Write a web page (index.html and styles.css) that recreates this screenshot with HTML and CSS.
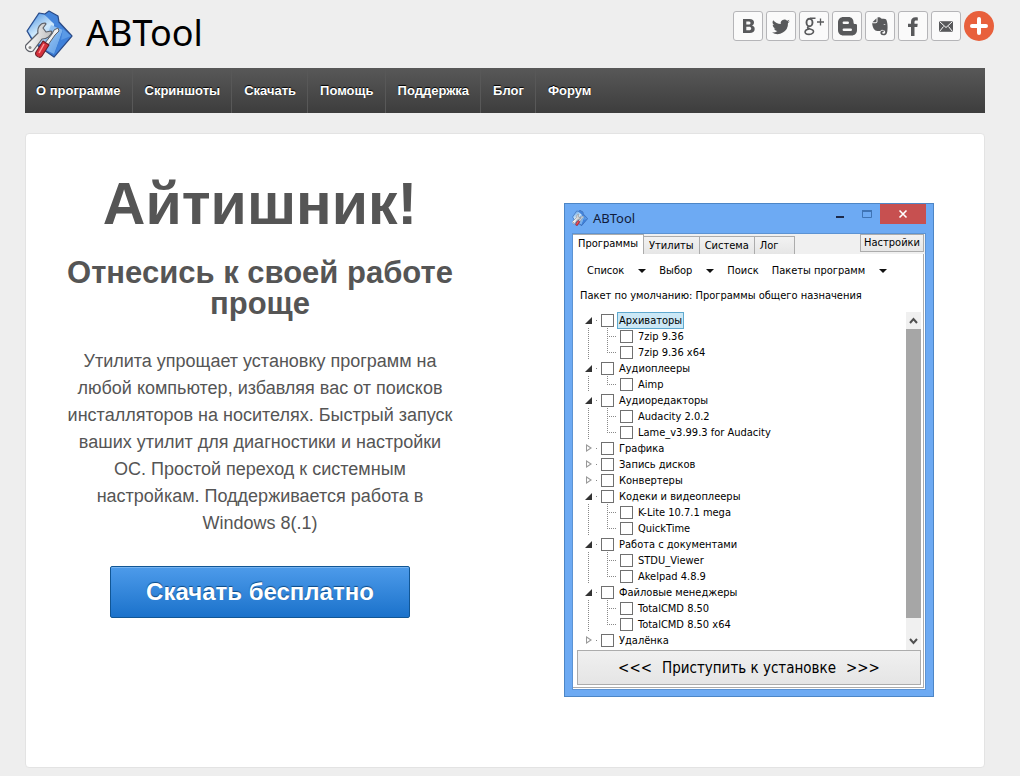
FILE: index.html
```html
<!DOCTYPE html>
<html lang="ru">
<head>
<meta charset="utf-8">
<title>ABTool</title>
<link rel="stylesheet" href="styles.css">
</head>
<body>
<svg class="defs" aria-hidden="true">
  <defs>
    <linearGradient id="sheet" x1=".2" y1="0" x2=".7" y2="1"><stop offset="0" stop-color="#5b9be2"/><stop offset=".5" stop-color="#cfe9fc"/><stop offset="1" stop-color="#8abdf0"/></linearGradient>
    <linearGradient id="folder" x1="0" y1="0" x2="1" y2="1"><stop offset="0" stop-color="#4f8fe0"/><stop offset="1" stop-color="#3170cb"/></linearGradient>
    <linearGradient id="flap" x1="0" y1="0" x2="1" y2="1"><stop offset="0" stop-color="#a9d2f8"/><stop offset="1" stop-color="#5b9ae4"/></linearGradient>
    <linearGradient id="steel" x1="0" y1="0" x2="1" y2="0"><stop offset="0" stop-color="#fff"/><stop offset="1" stop-color="#bdbdbd"/></linearGradient>
    <symbol id="logo" viewBox="0 0 48 48">
      <path d="M2 21 14 3l6 1 4-3 9 5 1 6 13 14-18 21L9 33z" fill="url(#folder)" stroke="#2a4a86" stroke-width="1.200" stroke-linejoin="round"/>
      <path d="M3 21 14.500 4l5 1 10 6-3 26-16-4z" fill="url(#sheet)"/>
      <path d="M20 5l4-3 8 5 1 6 12 13-5-2-13-12z" fill="#4585db"/>
      <path d="M26 15 38 20 29 44 17 38z" fill="url(#flap)"/>
      <path d="M38 19 46 26 29 46z" fill="#3f81da"/>
      <path d="M38 19 46 26 36 30z" fill="#5a9ae6"/>
      <path d="M1 35 13 23c-1-5 2-10 7-10l1 1-3 4 3 4 5-1 1 1c-1 4-5 7-10 7L8 41c-4 2-9-2-7-6z" fill="url(#steel)" stroke="#5d6068" stroke-width="1.200" stroke-linejoin="round"/>
      <circle cx="5" cy="37.500" r="1.500" fill="#888"/>
      <path d="M20 33 27 24l2-4 4-2 1 3-4 4-7 10z" fill="#f0f0f0" stroke="#5d6068" stroke-width="1"/>
      <path d="M18 31 24 35 17 46c-2 3-8 0-6-4z" fill="#d5303b" stroke="#6a1e26" stroke-width="1.100" stroke-linejoin="round"/>
      <path d="M19 34 14 43" stroke="#ff9b9b" stroke-width="1.500"/>
    </symbol>
  </defs>
</svg>

<header class="header">
  <a class="brand" href="#">
    <svg class="brand-icon" aria-hidden="true"><use href="#logo"/></svg>
    <span>ABTool</span>
  </a>
  <div class="share">
    <a class="share-link" href="#" aria-label="ВКонтакте"><svg viewBox="0 0 28 28"><path fill-rule="evenodd" d="M9 7h6.500c3 0 4.500 1.300 4.500 3.600 0 1.500-.8 2.500-2 3 1.600.4 2.700 1.500 2.700 3.300 0 2.700-2 4.100-5 4.100H9zm3.300 2.500v3h2c1.500 0 2.200-.5 2.200-1.500s-.7-1.500-2-1.500zm0 5.300v3.500h2.600c1.500 0 2.300-.6 2.300-1.800s-.9-1.700-2.400-1.700z"/></svg></a>
    <a class="share-link" href="#" aria-label="Twitter"><svg viewBox="0 0 28 28"><path d="M22.900 9.200c-.7.300-1.300.5-2 .6.700-.5 1.300-1.200 1.500-2-.7.500-1.500.7-2.300.9a3.700 3.700 0 0 0-6.300 3.400A10.500 10.500 0 0 1 6.200 8.200a3.700 3.700 0 0 0 1.200 5c-.6 0-1.200-.2-1.700-.5 0 1.800 1.300 3.300 3 3.700-.6.200-1.100.2-1.700.1.500 1.500 1.800 2.500 3.400 2.500A7.500 7.500 0 0 1 5 20.500 10.500 10.500 0 0 0 21 11.100c.7-.5 1.300-1.100 1.900-1.900z"/></svg></a>
    <a class="share-link" href="#" aria-label="Google+"><svg viewBox="0 0 28 28"><g fill="none" stroke="#58595b"><ellipse cx="9.500" cy="10.500" rx="3" ry="3.800" stroke-width="1.900"/><path d="M10 6.300h5.500M8.500 14.500c-3 2.200 2.500 2.200 4.300 3.600 2 1.800-.6 4.300-3.800 4.300-2.800 0-4.200-1.200-3.900-2.800.3-1.500 1.900-2.300 4-2.600" stroke-width="1.600"/><path d="M20.500 6.500v7M17 10h7" stroke-width="1.300"/></g></svg></a>
    <a class="share-link" href="#" aria-label="Blogger"><svg viewBox="0 0 28 28"><path fill-rule="evenodd" d="M10.500 5h5c3 0 5 2.200 5 5 0 1.700.5 2 2 2 1 0 1.500.5 1.500 1.500V18c0 3.300-2.300 5.500-5.500 5.500h-8C7.300 23.500 5 21.300 5 18v-7.500C5 7.200 7.300 5 10.500 5zm.3 4.600a1.200 1.200 0 0 0 0 2.400h4a1.200 1.200 0 0 0 0-2.400zm0 7a1.200 1.200 0 0 0 0 2.400h7a1.200 1.200 0 0 0 0-2.400z"/></svg></a>
    <a class="share-link" href="#" aria-label="Evernote"><svg viewBox="0 0 28 28"><path d="M10.500 6.200v3.200c0 .5-.3.800-.8.800H6.400zM11.500 5.400c1.500-.4 3.200.1 3.600 1 2 .2 3.900.3 4.800.8 1.100.6 2.300 6.700 1.400 12.200-.4 2.500-1.500 3.900-4 3.900-2 0-2.900-1.100-2.900-2.500 0-1.700 1.100-2.500 3.300-2.400v1.500c-1 0-1.500.3-1.500.9 0 .7.500 1 1.500 1 1.200 0 1.700-.9 1.500-2-.3-1.300-1.600-1.800-3.300-2-1 1.200-2.400 1.600-4.500 1.100-3-.4-4.500-2-5.300-7.700h3.500c1.300 0 1.900-.8 1.900-1.900z"/><path d="M17 12.500c1-1 2.200-.8 2.600.6-.9-.5-1.700-.7-2.600-.6z" fill="#fff"/></svg></a>
    <a class="share-link" href="#" aria-label="Facebook"><svg viewBox="0 0 28 28"><path d="M12 24v-9H9v-3.300h3V10c0-3.200 1.600-4.700 4.600-4.700.9 0 1.700.1 2.200.2v3h-1.700c-1.300 0-1.600.6-1.600 1.700v1.500h3.200l-.4 3.300h-2.800v9z"/></svg></a>
    <a class="share-link" href="#" aria-label="Почта"><svg viewBox="0 0 28 28"><path d="M7 9.200h14v10.600H7z"/><path d="M7.500 9.500 14 15.500l6.500-6M7.500 19.500l4-5M20.500 19.500l-4-5" fill="none" stroke="#fff" stroke-width="1"/></svg></a>
    <a class="share-more" href="#" aria-label="Ещё"><svg viewBox="0 0 30 30"><path d="M15 8v14M8 15h14" stroke="#fff" stroke-width="4" stroke-linecap="round"/></svg></a>
  </div>
</header>

<nav class="menu">
  <a href="#">О программе</a>
  <a href="#">Скриншоты</a>
  <a href="#">Скачать</a>
  <a href="#">Помощь</a>
  <a href="#">Поддержка</a>
  <a href="#">Блог</a>
  <a href="#">Форум</a>
</nav>

<main class="featured">
  <section class="pitch">
    <h1>Айтишник!</h1>
    <h2>Отнесись к своей работе проще</h2>
    <p>Утилита упрощает установку программ на любой компьютер, избавляя вас от поисков инсталляторов на носителях. Быстрый запуск ваших утилит для диагностики и настройки ОС. Простой переход к системным настройкам. Поддерживается работа в Windows 8(.1)</p>
    <a class="download" href="#">Скачать бесплатно</a>
  </section>

  <section class="window" aria-label="ABTool">
    <div class="titlebar">
      <svg class="titlebar-icon" aria-hidden="true"><use href="#logo"/></svg>
      <span class="titlebar-text">ABTool</span>
      <button class="win-button" aria-label="Свернуть"><svg viewBox="0 0 12 12"><path d="M2 9h8" stroke="#1d2a4a" stroke-width="2"/></svg></button>
      <button class="win-button" aria-label="Развернуть"><svg viewBox="0 0 12 12"><path d="M1.500 2.500h9v7h-9z" fill="none" stroke="#3f74b5"/><path d="M1 3h10" stroke="#3f74b5" stroke-width="2"/></svg></button>
      <button class="win-button close" aria-label="Закрыть"><svg viewBox="0 0 12 12"><path d="M2.500 2.500l7 7M9.500 2.500l-7 7" stroke="#fff" stroke-width="1.600"/></svg></button>
    </div>
    <div class="client">
      <div class="tabs">
        <button class="tab active">Программы</button>
        <button class="tab">Утилиты</button>
        <button class="tab">Система</button>
        <button class="tab log">Лог</button>
        <button class="settings">Настройки</button>
      </div>
      <div class="panel">
        <div class="toolbar">
          <button class="tool drop">Список</button>
          <button class="tool drop">Выбор</button>
          <button class="tool">Поиск</button>
          <button class="tool drop">Пакеты программ</button>
        </div>
        <p class="package">Пакет по умолчанию: Программы общего назначения</p>
        <div class="list">
          <ul class="tree">
            <li class="open"><label class="row selected"><input type="checkbox"><span>Архиваторы</span></label>
              <ul>
                <li><label class="row"><input type="checkbox"><span>7zip 9.36</span></label></li>
                <li><label class="row"><input type="checkbox"><span>7zip 9.36 x64</span></label></li>
              </ul></li>
            <li class="open"><label class="row"><input type="checkbox"><span>Аудиоплееры</span></label>
              <ul>
                <li><label class="row"><input type="checkbox"><span>Aimp</span></label></li>
              </ul></li>
            <li class="open"><label class="row"><input type="checkbox"><span>Аудиоредакторы</span></label>
              <ul>
                <li><label class="row"><input type="checkbox"><span>Audacity 2.0.2</span></label></li>
                <li><label class="row"><input type="checkbox"><span>Lame_v3.99.3 for Audacity</span></label></li>
              </ul></li>
            <li><label class="row"><input type="checkbox"><span>Графика</span></label></li>
            <li><label class="row"><input type="checkbox"><span>Запись дисков</span></label></li>
            <li><label class="row"><input type="checkbox"><span>Конвертеры</span></label></li>
            <li class="open"><label class="row"><input type="checkbox"><span>Кодеки и видеоплееры</span></label>
              <ul>
                <li><label class="row"><input type="checkbox"><span>K-Lite 10.7.1 mega</span></label></li>
                <li><label class="row"><input type="checkbox"><span>QuickTime</span></label></li>
              </ul></li>
            <li class="open"><label class="row"><input type="checkbox"><span>Работа с документами</span></label>
              <ul>
                <li><label class="row"><input type="checkbox"><span>STDU_Viewer</span></label></li>
                <li><label class="row"><input type="checkbox"><span>Akelpad 4.8.9</span></label></li>
              </ul></li>
            <li class="open"><label class="row"><input type="checkbox"><span>Файловые менеджеры</span></label>
              <ul>
                <li><label class="row"><input type="checkbox"><span>TotalCMD 8.50</span></label></li>
                <li><label class="row"><input type="checkbox"><span>TotalCMD 8.50 x64</span></label></li>
              </ul></li>
            <li><label class="row"><input type="checkbox"><span>Удалёнка</span></label></li>
          </ul>
          <div class="scrollbar" aria-hidden="true">
            <svg viewBox="0 0 15 17"><path d="M4 11l3.500-4 3.500 4" fill="none" stroke="#505050" stroke-width="2"/></svg>
            <div class="thumb"></div>
            <svg viewBox="0 0 15 17"><path d="M4 6l3.500 4L11 6" fill="none" stroke="#505050" stroke-width="2"/></svg>
          </div>
        </div>
        <button class="start"><span>&lt;&lt;&lt;</span><span>Приступить к установке</span><span>&gt;&gt;&gt;</span></button>
      </div>
    </div>
  </section>
</main>
</body>
</html>
```
FILE: styles.css
```css
* {
  box-sizing: border-box;
}

body {
  margin: 0;
  background: #eee;
  color: #555;
  font-family: "Liberation Sans", Arial, sans-serif;
}

a {
  color: inherit;
  text-decoration: none;
}

button {
  margin: 0;
  padding: 0;
  border: 0;
  background: none;
  color: inherit;
  font: inherit;
}

ul {
  margin: 0;
  padding: 0;
  list-style: none;
}

.defs {
  position: absolute;
  width: 0;
  height: 0;
}

/* Header */
.header {
  display: flex;
  justify-content: space-between;
  align-items: flex-start;
  height: 68px;
  padding: 10px 26px 0 25px;
}

.brand {
  display: flex;
  align-items: flex-start;
  gap: 13px;
  color: #000;
  font: 36px/46px "Noto Sans", sans-serif;
}

.brand-icon {
  width: 48px;
  height: 48px;
}

.share {
  display: flex;
  gap: 3px;
  padding-top: 1px;
}

.share-link {
  width: 30px;
  height: 30px;
  border: 1px solid #b5b5b8;
  border-radius: 3px;
  background: #fafafa;
  fill: #58595b;
}

.share-link svg,
.share-more svg {
  display: block;
}

.share-more {
  width: 30px;
  height: 30px;
  border-radius: 50%;
  background: #e8603c;
}

/* Main menu */
.menu {
  display: flex;
  margin: 0 35px 20px 25px;
  background: linear-gradient(#585858, #3d3d3d);
  color: #fff;
  font-size: 13px;
  font-weight: bold;
  line-height: 45px;
  text-shadow: 0 -1px 1px #000;
}

.menu a {
  padding: 0 11px 0 12px;
  border-right: 1px solid #585858;
}

.menu a:first-child {
  padding-left: 11px;
}

.menu a:last-child {
  border-right: 0;
}

/* Featured block */
.featured {
  display: flex;
  justify-content: space-between;
  align-items: flex-start;
  margin: 0 35px 8px 25px;
  padding: 39px 50px 70px 36px;
  border: 1px solid #e3e3e3;
  border-radius: 4px;
  background: #fff;
}

.pitch {
  width: 396px;
  text-align: center;
}

.pitch h1 {
  margin: 0 0 22px;
  font-size: 59px;
  line-height: 62px;
}

.pitch h2 {
  margin: 0 0 29px;
  font-size: 31px;
  line-height: 31px;
}

.pitch p {
  margin: 0 0 29px;
  font-size: 18px;
  line-height: 27px;
}

.download {
  display: block;
  width: 300px;
  margin: 0 auto;
  border: 1px solid #115695;
  border-radius: 2px;
  background: linear-gradient(#4d9bea, #1b72cb);
  box-shadow: inset 0 1px 0 #76b3f0;
  color: #fff;
  font-size: 24px;
  font-weight: bold;
  line-height: 50px;
  text-shadow: 0 -1px 1px #0d4a85;
}

/* Application window */
.window {
  width: 370px;
  margin-top: 30px;
  padding: 0 7px 6px;
  border: 1px solid #4d86c6;
  background: #6daaf3;
  color: #000;
  font: 11px/16px "DejaVu Sans Condensed", Tahoma, sans-serif;
}

.titlebar {
  display: flex;
  align-items: flex-start;
  height: 29px;
}

.titlebar-icon {
  width: 16px;
  height: 16px;
  margin: 6px 5px 0 0;
}

.titlebar-text {
  flex: 1;
  color: #111b3a;
  font: 13px/28px "Noto Sans", sans-serif;
}

.win-button {
  display: flex;
  align-items: center;
  justify-content: center;
  width: 27px;
  height: 20px;
}

.win-button svg {
  width: 12px;
  height: 12px;
}

.win-button.close {
  width: 46px;
  background: #c75050;
}

.client {
  padding: 0 1px 1px 0;
  border: 1px solid #5c93d3;
  background: linear-gradient(#f0f0f0 20px, #fff 20px);
}

.tabs {
  display: flex;
  align-items: flex-end;
  height: 20px;
}

.tab {
  height: 18px;
  padding: 0 5px;
  border: 1px solid #acacac;
  border-width: 1px 1px 0 0;
  background: linear-gradient(#f2f2f2, #e6e6e6);
}

.tab.active {
  height: 20px;
  padding-bottom: 2px;
  background: #fff;
}

.tab.log {
  padding-right: 15px;
}

.settings {
  align-self: flex-start;
  height: 18px;
  margin-left: auto;
  padding: 0 3px;
  border: 1px solid #acacac;
  background: linear-gradient(#f2f2f2, #e6e6e6);
}

.panel {
  padding: 4px 2px 2px 4px;
  border: 1px solid #acacac;
  border-width: 0 1px 1px 0;
}

.toolbar {
  display: flex;
  gap: 13px;
  height: 26px;
  padding-left: 10px;
}

.tool {
  display: flex;
  align-items: center;
}

.drop::after {
  content: "";
  margin-left: 14px;
  border: 4px solid transparent;
  border-top-color: #111;
  border-bottom: 0;
}

.package {
  margin: 4px 0 8px 3px;
}

.list {
  display: flex;
  justify-content: space-between;
}

.tree {
  padding: 0 0 2px 8px;
}

.row {
  display: flex;
  align-items: center;
  height: 16px;
}

.row::before {
  content: "";
  width: 16px;
  height: 16px;
  background: linear-gradient(#888, #888) 11px 8px / 1px 1px no-repeat;
}

.row input {
  appearance: none;
  width: 13px;
  height: 13px;
  margin: 0 4px 0 0;
  border: 1px solid #707070;
  background: #fff;
}

.row span {
  padding: 0 1px;
  line-height: 15px;
}

.row.selected span {
  background: #cbe8f6;
  box-shadow: 0 0 0 1px #5fa9cf;
}

.tree > li {
  position: relative;
}

/* Collapsed and expanded markers over the row's left edge */
.tree > li::before,
.tree > li::after {
  content: "";
  position: absolute;
  top: 4px;
  left: 1px;
  width: 6px;
  height: 8px;
  background: #999;
  clip-path: polygon(0 0, 100% 50%, 0 100%);
}

.tree > li::after {
  top: 6px;
  left: 2px;
  width: 3px;
  height: 4px;
  background: #fff;
}

.tree > li.open::before {
  top: 5px;
  left: 0;
  width: 7px;
  height: 7px;
  background: #333;
  clip-path: polygon(100% 0, 100% 100%, 0 100%);
}

.tree > li.open::after {
  content: none;
}

.tree ul {
  padding-left: 22px;
  background: repeating-linear-gradient(#888 0 1px, transparent 1px 2px) 3px 0 / 1px 100% no-repeat;
}

.tree ul .row::before {
  width: 9px;
  margin-right: 4px;
  background:
    repeating-linear-gradient(#888 0 1px, transparent 1px 2px) 0 0 / 1px 100% no-repeat,
    repeating-linear-gradient(90deg, #888 0 1px, transparent 1px 2px) 0 8px / 100% 1px no-repeat;
}

.tree ul li:last-child .row::before {
  background:
    repeating-linear-gradient(#888 0 1px, transparent 1px 2px) 0 0 / 1px 8px no-repeat,
    repeating-linear-gradient(90deg, #888 0 1px, transparent 1px 2px) 0 8px / 100% 1px no-repeat;
}

.scrollbar {
  display: flex;
  flex-direction: column;
  width: 15px;
  background: #f0f0f0;
}

.scrollbar svg {
  display: block;
  height: 17px;
}

.thumb {
  flex: 1;
  margin-bottom: 15px;
  background: #a6a6a6;
}

.start {
  display: flex;
  align-items: center;
  justify-content: center;
  gap: 10px;
  width: 100%;
  height: 35px;
  border: 1px solid #acacac;
  background: linear-gradient(#f0f0f0, #e5e5e5);
  font-size: 15px;
}
```
